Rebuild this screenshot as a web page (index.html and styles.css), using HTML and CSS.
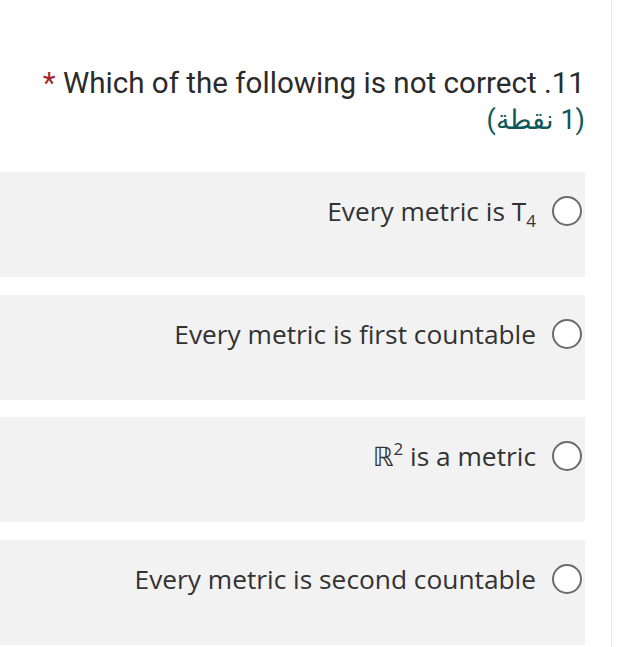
FILE: index.html
```html
<!DOCTYPE html>
<html lang="ar">
<head>
<meta charset="utf-8">
<link rel="stylesheet" href="styles.css">
</head>
<body>
<div class="page">
  <div class="content" dir="rtl">
    <div class="question">
      <div class="title">11. Which of the following is not correct <span class="req">*</span></div>
      <div class="points">(1 نقطة)</div>
    </div>
    <div class="options">
      <label class="option"><span class="radio"></span><span class="text" dir="ltr">Every metric is T<sub>4</sub></span></label>
      <label class="option"><span class="radio"></span><span class="text" dir="ltr">Every metric is first countable</span></label>
      <label class="option"><span class="radio"></span><span class="text" dir="ltr"><span class="bb">ℝ</span><sup>2</sup> is a metric</span></label>
      <label class="option"><span class="radio"></span><span class="text" dir="ltr">Every metric is second countable</span></label>
    </div>
  </div>
</div>
</body>
</html>
```
FILE: styles.css
```css
html, body {
  margin: 0;
  padding: 0;
  background: #ffffff;
}
.page {
  width: 612px;
  height: 647px;
  border-right: 1px solid #ececec;
  box-sizing: border-box;
  overflow: hidden;
}
.content {
  width: 585px;
}
.question {
  padding: 64px 0 0 0;
  height: 172px;
  box-sizing: border-box;
}
.title {
  font-family: Roboto, "Noto Sans", sans-serif;
  font-size: 29.6px;
  line-height: 38px;
  color: #2b2b2b;
}
.req {
  color: #a4262c;
}
.points {
  font-family: Roboto, "Noto Sans", sans-serif;
  font-size: 27px;
  line-height: 36px;
  color: #0f5757;
}
.options {
  display: flex;
  flex-direction: column;
  gap: 17.7px;
}
.option {
  display: flex;
  flex-direction: row;
  align-items: flex-start;
  height: 105px;
  background: #f2f2f2;
  padding: 23px 3px 0 0;
  box-sizing: border-box;
  gap: 16px;
}
.radio {
  width: 26px;
  height: 26px;
  border: 2px solid #6b6b6b;
  border-radius: 50%;
  background: #ffffff;
  flex: none;
  margin-top: 1px;
}
.text {
  font-family: "Open Sans", "DejaVu Sans", sans-serif;
  font-size: 26.3px;
  line-height: 32px;
  color: #333333;
}
.text sub {
  font-size: 17px;
  vertical-align: -6px;
  line-height: 0;
}
.text sup {
  font-size: 17px;
  vertical-align: 11px;
  line-height: 0;
}
.bb {
  font-family: "DejaVu Sans", sans-serif;
  font-weight: normal;
}
```
